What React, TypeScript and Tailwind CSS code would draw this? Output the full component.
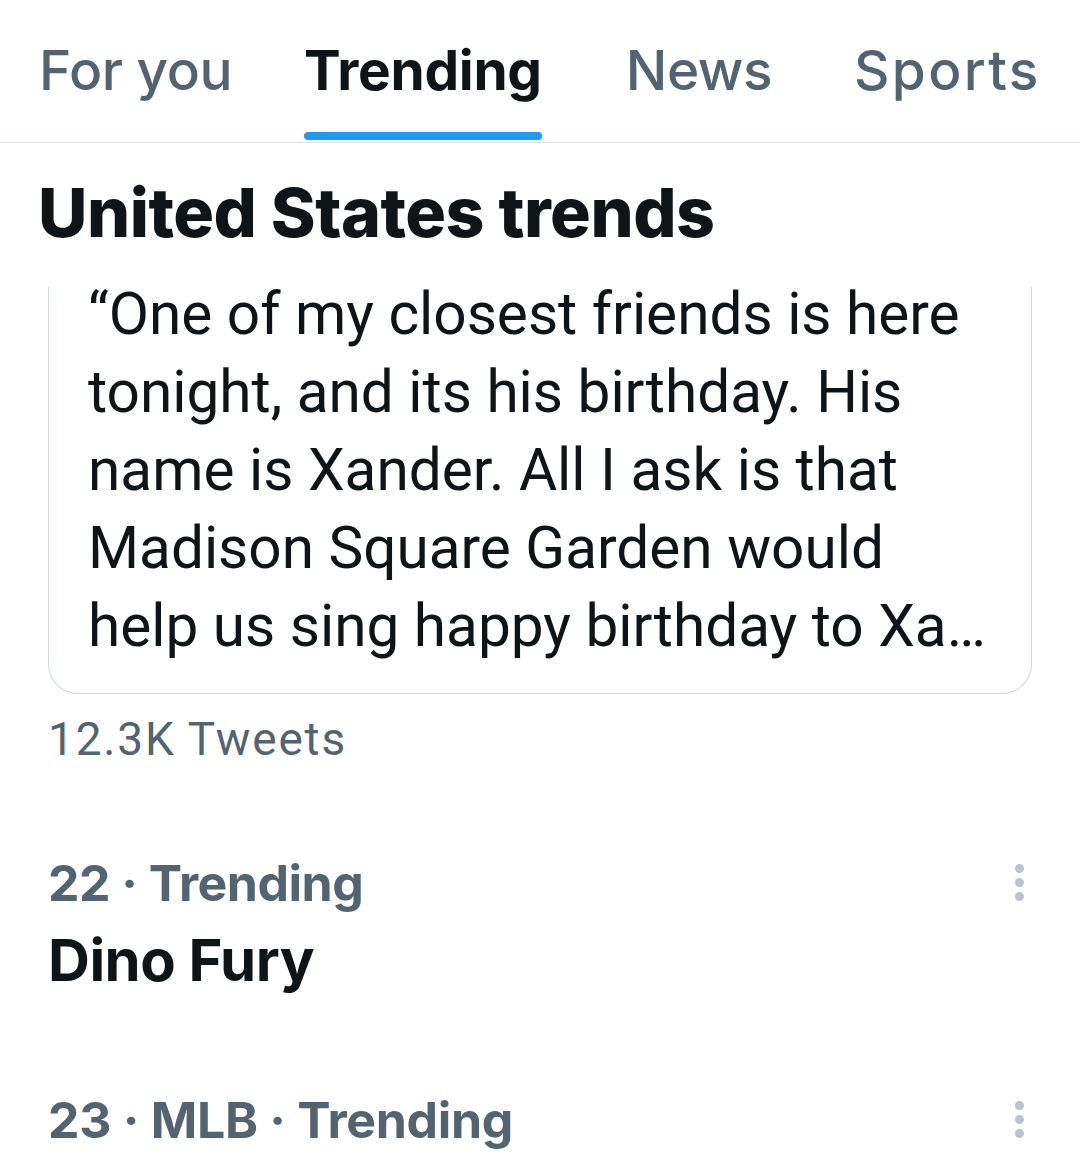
import React from "react";

const Dots = () => (
  <div className="flex flex-col gap-[5px] pt-[6px] pr-[56px]">
    <span className="block w-[9px] h-[9px] rounded-full bg-[#b9c4cc]" />
    <span className="block w-[9px] h-[9px] rounded-full bg-[#b9c4cc]" />
    <span className="block w-[9px] h-[9px] rounded-full bg-[#b9c4cc]" />
  </div>
);

export default function App() {
  const lines = [
    "“One of my closest friends is here",
    "tonight, and its his birthday. His",
    "name is Xander. All I ask is that",
    "Madison Square Garden would",
    "help us sing happy birthday to Xa…",
  ];
  const inactive = "text-[55px] leading-none whitespace-nowrap font-medium text-[#536471] tracking-[-0.5px]";
  return (
    <div className="w-[1080px] h-[1154px] bg-white overflow-hidden font-['Inter',sans-serif] text-[#0f1419]">
      <div className="flex pl-[39px] h-[143px] border-b border-[#dfe4e7]">
        <div className="flex flex-col pt-[43px]">
          <span className={inactive}>For you</span>
        </div>
        <div className="flex flex-col pt-[43px] ml-[72px]">
          <span className="text-[55px] leading-none whitespace-nowrap font-bold text-[#0f1419] tracking-[-0.3px]">Trending</span>
          <span className="block mt-[34px] h-[8px] rounded-full bg-[#1d9bf0]" />
        </div>
        <div className="flex flex-col pt-[43px] ml-[84px]">
          <span className={inactive}>News</span>
        </div>
        <div className="flex flex-col pt-[43px] ml-[82px]">
          <span className="text-[55px] leading-none whitespace-nowrap font-medium text-[#536471] tracking-[2.3px]">Sports</span>
        </div>
      </div>
      <h1 className="mt-[35px] pl-[38px] text-[68px] leading-none font-extrabold tracking-[-0.5px]">United States trends</h1>
      <div className="mt-[41px] px-[48px] overflow-hidden">
        <div className="-mt-[12px] border-x border-b border-[#cfd9de] rounded-b-[30px] pl-[39px] pr-[30px] pb-[28px]">
          <p className="font-['Roboto',sans-serif] text-[58.5px] leading-[78px] whitespace-nowrap">
            {lines.map((l, i) => (
              <span key={i} className="block">
                {l}
              </span>
            ))}
          </p>
        </div>
      </div>
      <div className="mt-[22px] pl-[48px] font-['Roboto',sans-serif] text-[46px] leading-none text-[#536471] tracking-[1.8px]">12.3K Tweets</div>
      <div className="mt-[96px] pl-[48px] flex justify-between items-start">
        <div className="flex flex-col">
          <span className="text-[50px] leading-none font-bold text-[#536471] tracking-[-0.5px]">22 · Trending</span>
          <span className="mt-[23px] text-[58px] leading-none font-bold tracking-[-0.5px]">Dino Fury</span>
        </div>
        <Dots />
      </div>
      <div className="mt-[106px] pl-[48px] flex justify-between items-start">
        <span className="text-[50px] leading-none font-bold text-[#536471] tracking-[-0.3px]">23 · MLB · Trending</span>
        <Dots />
      </div>
    </div>
  );
}
